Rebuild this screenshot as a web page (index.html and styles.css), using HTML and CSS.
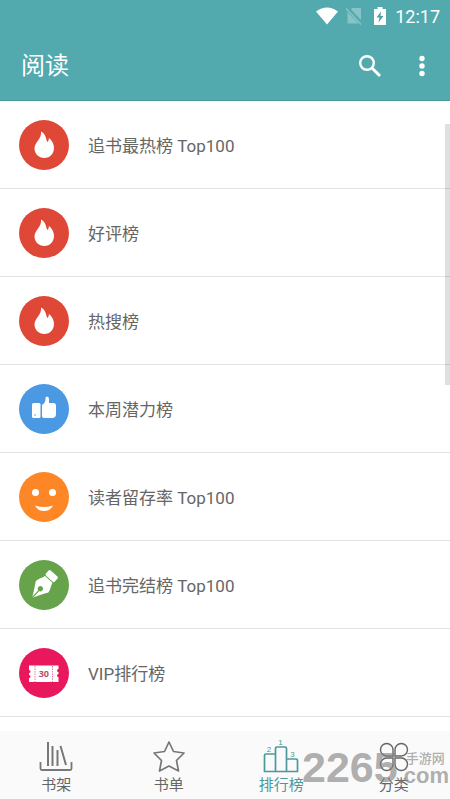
FILE: index.html
```html
<!DOCTYPE html>
<html lang="zh-CN">
<head>
<meta charset="utf-8">
<meta name="viewport" content="width=device-width, initial-scale=1">
<title>阅读</title>
<link rel="stylesheet" href="styles.css">
</head>
<body>
<header class="top">
  <div class="status">
    <svg width="24" height="20" viewBox="0 0 24 20"><path d="M1 5.500Q12-2.500 23 5.500L12 18.500Z" fill="#fff"/></svg>
    <svg class="nosim" width="16" height="20" viewBox="0 0 16 20"><path d="M6 2H15V14L5 3.500ZM1.500 6L12.500 17.500H1.500Z" fill="#86c4c7"/><path d="M0 2.500L15 18.500" stroke="#86c4c7" stroke-width="1.500"/></svg>
    <svg width="12" height="20" viewBox="0 0 12 20"><path d="M3.500 1h5v2H12v16H0V3h3.500Z" fill="#fff"/><path d="M7 5.500L2.500 11.500H5.500L4.500 16.500L9.500 10H6.500Z" fill="#4f9fa4"/></svg>
    <span>12:17</span>
  </div>
  <div class="bar">
    <h1>阅读</h1>
    <button aria-label="搜索"><svg width="24" height="24" viewBox="0 0 24 24" fill="none" stroke="#fff"><circle cx="9" cy="9" r="6.800" stroke-width="2.400"/><path d="M14 14L22 22" stroke-width="3"/></svg></button>
    <button aria-label="更多"><svg width="24" height="24" viewBox="0 0 24 24" fill="#fff"><circle cx="12" cy="4.500" r="2.700"/><circle cx="12" cy="12" r="2.700"/><circle cx="12" cy="19.500" r="2.700"/></svg></button>
  </div>
</header>
<main>
  <ul class="list">
    <li><a href="#"><svg class="disc red" viewBox="0 0 50 50"><use href="#flame"/></svg>追书最热榜 Top100</a></li>
    <li><a href="#"><svg class="disc red" viewBox="0 0 50 50"><use href="#flame"/></svg>好评榜</a></li>
    <li><a href="#"><svg class="disc red" viewBox="0 0 50 50"><use href="#flame"/></svg>热搜榜</a></li>
    <li><a href="#"><svg class="disc blue" viewBox="0 0 50 50" fill="#fff"><rect x="13" y="19" width="8.500" height="15" rx="1.500"/><path d="M23 21Q26.500 19 26.500 14.500Q26.500 12.500 28 12.500Q30 12.500 30 15V19H34.500Q37 19 37 22V30Q37 34 33 34H26Q23 34 23 32Z"/><circle cx="16" cy="31" r="0.800" fill="#4b98e3"/></svg>本周潜力榜</a></li>
    <li><a href="#"><svg class="disc orange" viewBox="0 0 50 50" fill="#fff"><circle cx="16.500" cy="20.500" r="3.500"/><circle cx="33.500" cy="20.500" r="3.500"/><path d="M16 33.500Q25 36.500 34 33.500Q31.500 39 25 39Q18.500 39 16 33.500Z"/></svg>读者留存率 Top100</a></li>
    <li><a href="#"><svg class="disc green" viewBox="0 0 50 50"><g transform="translate(13 38) rotate(42)" fill="#fff"><path d="M0 0C-3-6-6-11-8.500-15C-8.500-18-6-21-5-25H5C6-21 8.500-18 8.500-15C6-11 3-6 0 0Z"/><rect x="-6" y="-33" width="12" height="7" rx="1.500"/><path d="M0 0V-11" stroke="#67a34a" stroke-width="1.200"/><circle cx="0" cy="-12.500" r="2.600" fill="#67a34a"/></g></svg>追书完结榜 Top100</a></li>
    <li><a href="#"><svg class="disc pink" viewBox="0 0 50 50"><path d="M10 17.500H39.500V21a1.500 1.500 0 0 0 0 3v2a1.500 1.500 0 0 0 0 3V34H10V30a1.500 1.500 0 0 0 0-3v-2a1.500 1.500 0 0 0 0-3Z" fill="#fff"/><path d="M16 18V34M33.500 18V34" stroke="#e9185c" stroke-width="0.600" stroke-dasharray="1.500 1"/><text x="24.800" y="29" class="num">30</text></svg>VIP排行榜</a></li>
  </ul>
  <div class="thumb"></div>
</main>
<nav>
  <a href="#"><svg width="36" height="34" viewBox="0 0 36 34" fill="none" stroke="#777"><path d="M2.500 22V28.500Q2.500 30 4 30H32Q33.500 30 33.500 28.500V22" stroke-width="1.800"/><path d="M10 2V26M14.500 6V26M19.500 10V26M22.500 6L28 25" stroke-width="2"/></svg>书架</a>
  <a href="#"><svg width="36" height="34" viewBox="0 0 36 34" fill="none" stroke="#777" stroke-width="1.700" stroke-linejoin="round"><path d="M18 2L22.500 11.500L33 13L25.500 20.500L27.500 31L18 26L8.500 31L10.500 20.500L3 13L13.500 11.500Z"/></svg>书单</a>
  <a href="#" class="on" aria-current="page"><svg width="36" height="34" viewBox="0 0 36 34"><path d="M1.500 31.500V15.500Q1.500 14 3 14H12.500V31.500ZM12.500 31.500V8.500Q12.500 7 14 7H22Q23.500 7 23.500 8.500V31.500ZM23.500 19H33Q34.500 19 34.500 20.500V31.500H23.500" fill="none" stroke="#4b999d" stroke-width="1.700"/><text x="6" y="12" class="rank">2</text><text x="17.500" y="5" class="rank">1</text><text x="29.500" y="17" class="rank">3</text></svg>排行榜</a>
  <a href="#"><svg width="36" height="34" viewBox="0 0 36 34" fill="none" stroke="#666" stroke-width="1.400"><path d="M17 16H10.500A6.250 6.250 0 1 1 17 9.500ZM19 16H25.500A6.250 6.250 0 1 0 19 9.500ZM17 18H10.500A6.250 6.250 0 1 0 17 24.500ZM19 18H25.500A6.250 6.250 0 1 1 19 24.500Z"/></svg>分类</a>
  <div class="mark"><b>2265</b><span><i>手游网</i><em>.com</em></span></div>
</nav>
<svg class="defs"><symbol id="flame" viewBox="0 0 50 50"><path d="M22 11.500C28 15 26.500 19.500 28.500 22C30 21 29.500 19 30 18C33.500 21 35 24.500 35 28C35 34 30.500 38 25.500 38C19.500 38 15.500 33.500 15.500 28.500C15.500 22 23 19 22 11.500Z" fill="#fff"/></symbol></svg>
</body>
</html>
```
FILE: styles.css
```css
* { box-sizing: border-box; }
body {
  margin: 0;
  height: 100vh;
  display: flex;
  flex-direction: column;
  background: #fff;
  color: #666;
  font-family: Roboto, "Noto Sans CJK SC", sans-serif;
}
a { color: inherit; text-decoration: none; }
.top { background: #52a9ae; color: #fff; border-bottom: 1px solid #4b999e; }
.status {
  display: flex;
  align-items: center;
  justify-content: flex-end;
  height: 32px;
  padding-right: 10px;
  font-size: 18px;
}
.nosim { margin: 0 12px 0 7px; }
.status span { margin-left: 9px; }
.bar { display: flex; align-items: center; height: 68px; padding: 0 10px 0 21px; }
.bar h1 { flex: 1; margin: 0; font-size: 24px; font-weight: 400; line-height: 32px; }
.bar button {
  display: flex;
  margin-left: 28px;
  padding: 0;
  border: 0;
  background: none;
}
.bar button + button { margin-right: 6px; }
main { position: relative; flex: 1; min-height: 0; overflow: hidden; }
.list { margin: 0; padding: 0; list-style: none; }
.list li { height: 88px; border-bottom: 1px solid #e2e2e2; }
.list a { display: flex; align-items: center; gap: 19px; height: 100%; padding-left: 19px; font-size: 17px; }
.disc { width: 50px; height: 50px; border-radius: 50%; }
.red { background: #df4737; }
.blue { background: #4b98e3; }
.orange { background: #fd8726; }
.green { background: #67a34a; }
.pink { background: #e9185c; }
.num { font: bold 9px "Open Sans", sans-serif; fill: #b34c72; text-anchor: middle; }
.thumb { position: absolute; top: 23px; right: 0; width: 5px; height: 261px; background: rgba(0, 0, 0, 0.12); }
nav {
  position: relative;
  display: flex;
  height: 68px;
  background: #fafafa;
}
nav a {
  flex: 1;
  display: flex;
  flex-direction: column;
  align-items: center;
  padding-top: 9px;
  font-size: 15px;
  line-height: 22px;
}
nav a svg { flex: none; overflow: visible; }
nav .on { color: #4b999d; }
.rank { font: 8px "Liberation Sans", sans-serif; fill: #4b999d; text-anchor: middle; }
.mark {
  position: absolute;
  right: 1px;
  bottom: 14px;
  display: flex;
  align-items: flex-end;
  color: rgba(130, 130, 130, 0.65);
  font-family: "Liberation Sans", "Noto Sans CJK SC", sans-serif;
  pointer-events: none;
}
.mark b { font-size: 43px; line-height: 36px; }
.mark span { display: flex; flex-direction: column; }
.mark i { padding-left: 8px; font-size: 13px; font-style: normal; font-weight: 500; line-height: 16px; }
.mark em { font-size: 22px; font-style: normal; font-weight: 700; line-height: 18px; }
.defs { position: absolute; width: 0; height: 0; }
```
